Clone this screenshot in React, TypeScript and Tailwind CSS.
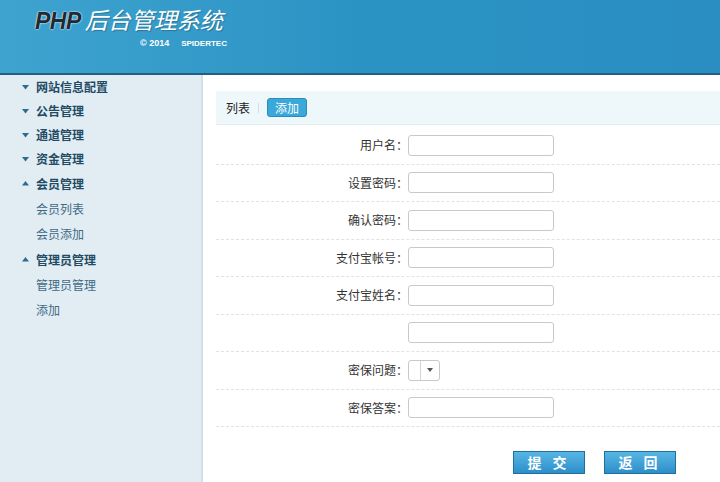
import React from "react";

const font = { fontFamily: '"Noto Sans CJK SC", "Liberation Sans", sans-serif' };

function Down() {
  return (
    <svg width="7" height="5" viewBox="0 0 7 5" className="shrink-0">
      <path d="M0 0 L7 0 L3.5 4.5 Z" fill="#2f6a93" />
    </svg>
  );
}
function Up() {
  return (
    <svg width="7" height="5" viewBox="0 0 7 5" className="shrink-0">
      <path d="M0 4.5 L7 4.5 L3.5 0 Z" fill="#2f6a93" />
    </svg>
  );
}

const menu: { t: string; kind: "down" | "up" | "sub" }[] = [
  { t: "网站信息配置", kind: "down" },
  { t: "公告管理", kind: "down" },
  { t: "通道管理", kind: "down" },
  { t: "资金管理", kind: "down" },
  { t: "会员管理", kind: "up" },
  { t: "会员列表", kind: "sub" },
  { t: "会员添加", kind: "sub" },
  { t: "管理员管理", kind: "up" },
  { t: "管理员管理", kind: "sub" },
  { t: "添加", kind: "sub" },
];

const rows = ["用户名：", "设置密码：", "确认密码：", "支付宝帐号：", "支付宝姓名：", "", "密保问题：", "密保答案："];

export default function App() {
  return (
    <div className="w-[720px] h-[482px] overflow-hidden bg-white flex flex-col" style={font}>
      {/* header */}
      <div className="h-[73px] shrink-0 bg-gradient-to-r from-[#3ea3cf] via-[#2b93c4] to-[#2a8ec2] flex flex-col pl-[35px] pt-[8px]">
        <div className="flex items-baseline gap-[4px] leading-none">
          <span
            className="text-[23px] italic font-bold text-[#1f2a33] tracking-[-0.5px]"
            style={{ fontFamily: '"Liberation Sans", sans-serif', textShadow: "0 0 2px #fff, 0 0 1px #fff" }}
          >
            PHP
          </span>
          <span className="text-[23px] italic text-white" style={{ textShadow: "1px 1px 1px rgba(0,0,0,0.25)" }}>
            后台管理系统
          </span>
        </div>
        <div
          className="ml-[105px] mt-[6px] text-[9px] font-bold text-white leading-none flex items-baseline gap-[12px]"
          style={{ fontFamily: '"Liberation Sans", sans-serif' }}
        >
          <span>© 2014</span>
          <span className="text-[8px]">SPIDERTEC</span>
        </div>
      </div>
      <div className="h-[2px] shrink-0 bg-[#235f80]" />
      <div className="flex flex-1 min-h-0">
        {/* sidebar */}
        <div className="w-[203px] shrink-0 bg-[#e1edf3] border-r-[2px] border-[#cfe0e8]">
          {menu.map((m, i) => (
            <div key={i} className={`${i < 4 ? "h-[24px]" : "h-[25.3px]"} flex items-center pl-[22px]`}>
              {m.kind === "sub" ? (
                <span className="pl-[14px] text-[12px] text-[#3f6a85]">{m.t}</span>
              ) : (
                <>
                  {m.kind === "down" ? <Down /> : <Up />}
                  <span className="pl-[7px] text-[12px] font-bold text-[#234a63]">{m.t}</span>
                </>
              )}
            </div>
          ))}
        </div>
        {/* content */}
        <div className="flex-1 pl-[13px] pt-[16px]">
          <div className="h-[34px] bg-[#eef8fa] border-b border-[#e1eff3] flex items-center pl-[10px]">
            <span className="text-[12px] text-[#222]">列表</span>
            <span className="mx-[8px] w-px h-[10px] bg-[#d5dde0]" />
            <span className="h-[19px] px-[7px] rounded-[3px] bg-[#3aa8d8] border border-[#2a8cbc] text-white text-[12px] flex items-center">
              添加
            </span>
          </div>
          <div className="pt-[2px]">
            {rows.map((r, i) => (
              <div key={i} className="h-[37.5px] flex items-center border-b border-dashed border-[#e2e2e2]">
                <div className="w-[192px] text-right text-[12px] text-[#333]">{r}</div>
                <div>
                  {i === 6 ? (
                    <div className="w-[32px] h-[21px] border border-[#c9c9c9] rounded-[3px] flex">
                      <div className="w-[12px] border-r border-[#d4d4d4]" />
                      <div className="flex-1 flex items-center justify-center">
                        <svg width="6" height="4" viewBox="0 0 6 4">
                          <path d="M0 0 L6 0 L3 4 Z" fill="#555" />
                        </svg>
                      </div>
                    </div>
                  ) : (
                    <div className="w-[146px] h-[21px] border border-[#c9c9c9] rounded-[3px] bg-white" />
                  )}
                </div>
              </div>
            ))}
          </div>
          <div className="flex gap-[19px] pl-[297px] pt-[24px]">
            {["提 交", "返 回"].map((b) => (
              <div
                key={b}
                className="w-[72px] h-[23px] border border-[#1f6e9c] bg-gradient-to-b from-[#58b6e4] to-[#2c8fca] text-white text-[14px] font-bold tracking-[4px] flex items-center justify-center"
              >
                {b}
              </div>
            ))}
          </div>
        </div>
      </div>
    </div>
  );
}
